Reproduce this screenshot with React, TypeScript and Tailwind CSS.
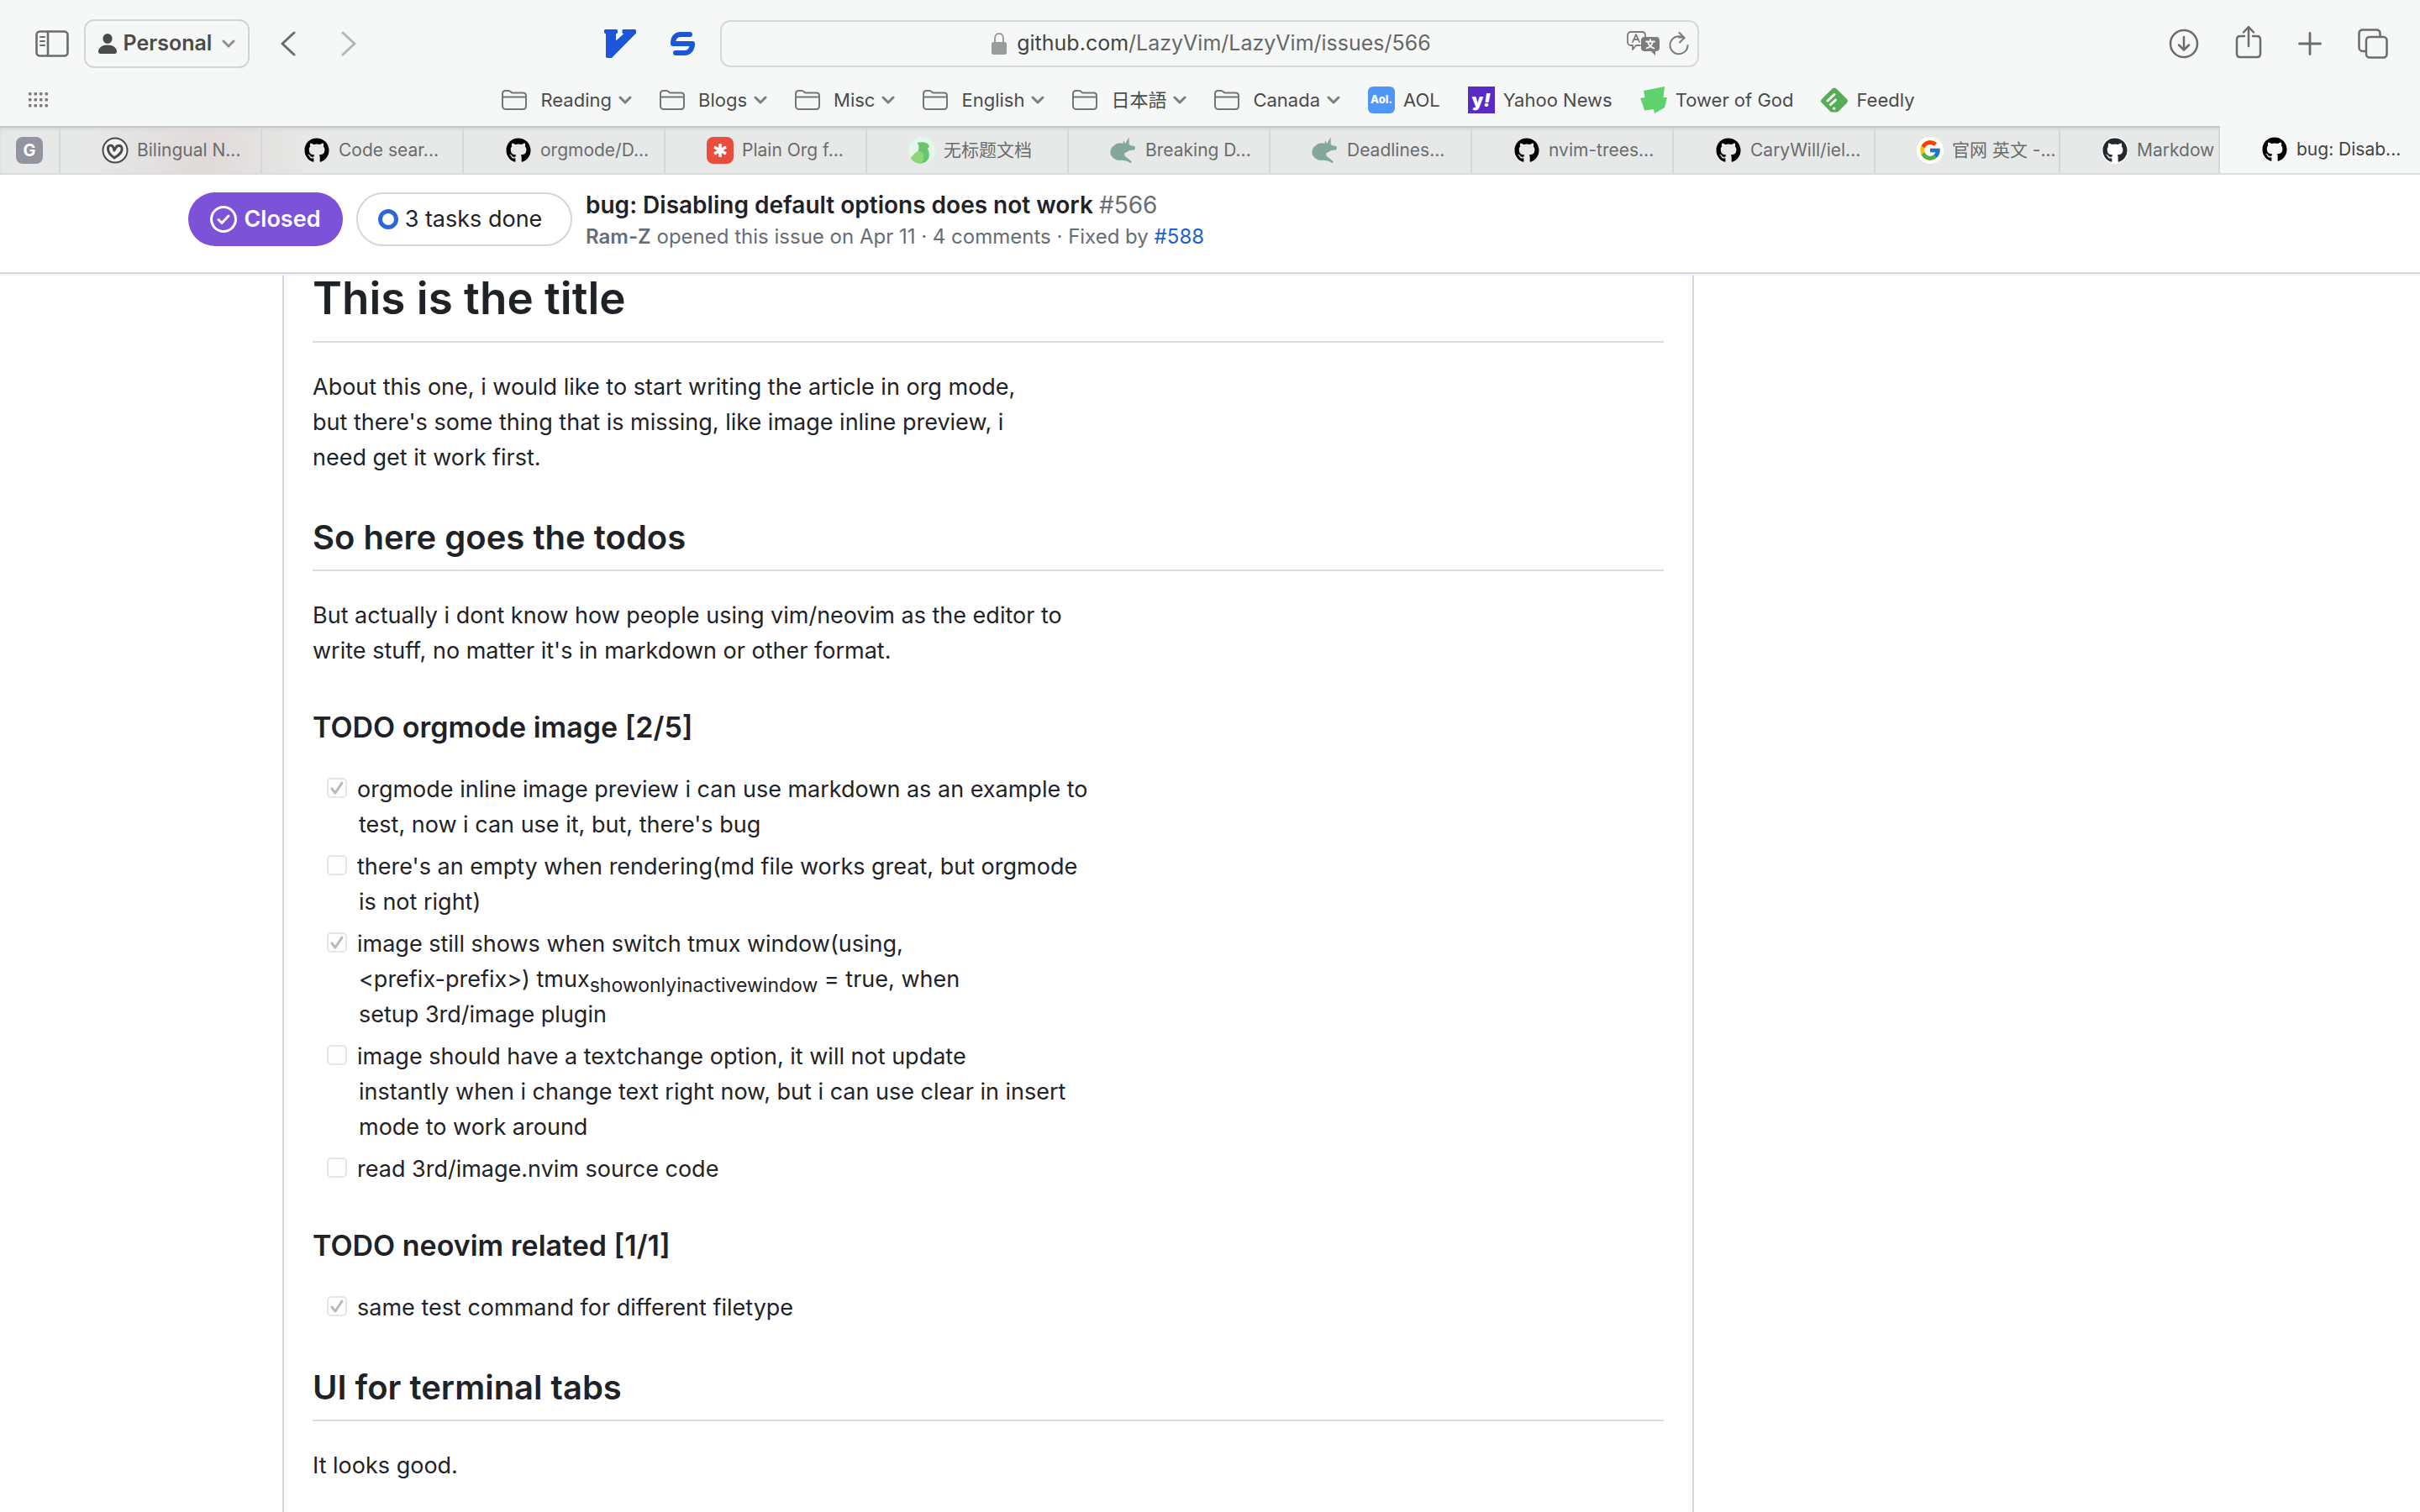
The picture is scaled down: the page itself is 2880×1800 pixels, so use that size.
import React from "react";
import { FaGithub } from "react-icons/fa";
import { FcGoogle } from "react-icons/fc";

const stroke = {
  fill: "none",
  stroke: "currentColor",
  strokeLinecap: "round" as const,
  strokeLinejoin: "round" as const,
};

function SidebarIcon() {
  return (
    <svg width="40" height="32" viewBox="0 0 40 32" {...stroke} strokeWidth="2.6">
      <rect x="1.5" y="1.5" width="37" height="29" rx="4" />
      <path d="M15 2v28" />
      <path d="M6 8h5M6 13h5M6 18h5" strokeWidth="2" />
    </svg>
  );
}

function PersonIcon() {
  return (
    <svg width="22" height="24" viewBox="0 0 22 24" fill="currentColor">
      <ellipse cx="11" cy="6" rx="5.6" ry="6" />
      <path d="M0 21.5c0-4.600 4.500-8 11-8s11 3.400 11 8c0 1.500-1 2.500-2.500 2.500h-17C1 24 0 23 0 21.500z" />
    </svg>
  );
}

function ChevronDown() {
  return (
    <svg width="16" height="10" viewBox="0 0 16 10" {...stroke} strokeWidth="3">
      <path d="M2 2l6 6 6-6" />
    </svg>
  );
}

function Arrow({ forward }: { forward?: boolean }) {
  return (
    <svg width="18" height="30" viewBox="0 0 18 30" {...stroke} strokeWidth="3">
      <path d={forward ? "M2 2l14 13L2 28" : "M16 2L2 15l14 13"} />
    </svg>
  );
}

function VimiumIcon() {
  return (
    <svg width="38" height="36" viewBox="0 0 38 36" fill="#1b55d9">
      <path d="M1 1h14l1 1v3l-2 1.500v8L23 6.500l-1.500-1.500V2l1-1H37l1 1v3.500L9 35H3.500L2 34V6.500L0 5V2z" />
    </svg>
  );
}

function SurfIcon() {
  return (
    <svg width="30" height="30" viewBox="0 0 30 30" {...stroke} stroke="#1b55d9" strokeWidth="6">
      <path d="M24 4H13C7 4 4 8 4 15h23c0 6-3.500 11-9 11H7" />
    </svg>
  );
}

function LockIcon() {
  return (
    <svg width="18" height="26" viewBox="0 0 18 26" fill="#9b9c9c">
      <rect x="0" y="11" width="18" height="15" rx="2.500" />
      <path d="M4 12V7c0-3.500 2-6 5-6s5 2.500 5 6v5" fill="none" stroke="#9b9c9c" strokeWidth="2" />
    </svg>
  );
}

function TranslateIcon() {
  return (
    <svg width="40" height="30" viewBox="0 0 40 30">
      <path
        d="M16 17h-5l-4 5v-5H5c-2.500 0-4-1.500-4-4V5c0-2.500 1.500-4 4-4h13c2.500 0 4 1.500 4 4v2M7 13l4-9 4 9M8.500 10h5"
        {...stroke}
        stroke="#7b7c7c"
        strokeWidth="1.800"
      />
      <path d="M21 7h14c2.500 0 4 1.500 4 4v9c0 2.500-1.500 4-4 4h-1v5l-5-5h-8c-2.500 0-4-1.500-4-4v-9c0-2.500 1.500-4 4-4z" fill="#7b7c7c" />
      <path d="M23 12.500h10M28 10v2.500M31 12.500c-1 4-4 7-7.500 8M25 12.500c1 4 4 7 7.500 8" {...stroke} stroke="#f6f8f7" strokeWidth="1.800" />
    </svg>
  );
}

function ReloadIcon() {
  return (
    <svg width="24" height="28" viewBox="0 0 24 28" {...stroke} strokeWidth="2">
      <path d="M18.500 7.500A10.500 10.500 0 1 0 22.500 16M12 6.500h6.500M12.500 1l6 6-5.500 5.500" />
    </svg>
  );
}

function DownloadIcon() {
  return (
    <svg width="36" height="36" viewBox="0 0 36 36" {...stroke} strokeWidth="2.500">
      <circle cx="18" cy="18" r="16" />
      <path d="M18 10v15M12 19.500l6 6 6-6" />
    </svg>
  );
}

function ShareIcon() {
  return (
    <svg width="32" height="40" viewBox="0 0 32 40" {...stroke} strokeWidth="2.500">
      <path d="M11 13H6c-2.500 0-4 1.500-4 4v17c0 2.500 1.500 4 4 4h20c2.500 0 4-1.500 4-4V17c0-2.500-1.500-4-4-4h-5M16 25V3M10 8.500L16 2l6 6.500" />
    </svg>
  );
}

function PlusIcon() {
  return (
    <svg width="28" height="28" viewBox="0 0 28 28" {...stroke} strokeWidth="2.800">
      <path d="M14 1.500v25M1.500 14h25" />
    </svg>
  );
}

function TabsIcon() {
  return (
    <svg width="36" height="36" viewBox="0 0 36 36" {...stroke} strokeWidth="2.500">
      <rect x="10" y="10" width="24.500" height="24.500" rx="4" />
      <path d="M9 27H6c-2.500 0-4.500-2-4.500-4.500v-17C1.500 3 3.500 1.500 6 1.500h16c2.500 0 4.500 1.500 4.500 4V9" />
    </svg>
  );
}

function GridIcon() {
  return (
    <svg width="24" height="18" viewBox="0 0 24 18" fill="#7a7b7b">
      {[0, 7, 14].map((y) => [0, 6.5, 13, 19.5].map((x) => <rect key={x + "-" + y} x={x} y={y} width="3.500" height="3.500" rx="1" />))}
    </svg>
  );
}

function FolderIcon() {
  return (
    <svg width="30" height="24" viewBox="0 0 30 24" {...stroke} stroke="#757676" strokeWidth="2">
      <path d="M1 4.500C1 2.500 2.200 1 4.500 1h4c2 0 2.500 2.500 4.500 2.500h12.500c2.300 0 3.500 1 3.500 3.500v12c0 2.500-1.200 4-3.500 4h-21C2.200 23 1 21.500 1 19zM1 8.500h28" />
    </svg>
  );
}

function TowerIcon() {
  return (
    <svg width="32" height="32" viewBox="0 0 32 32" fill="#5fd26d">
      <path d="M4 5l25-5-1.500 13H32l-3 12-12 7-1-5-11 1.500-2-7L0 14l5.500-1z" />
    </svg>
  );
}

function FeedlyIcon() {
  return (
    <svg width="32" height="30" viewBox="0 0 32 30">
      <path d="M13 2c2-2 4-2 6 0l11.500 11.500c2 2 2 3.500 0 5.500L21 28.500c-.8.800-1.500 1-2.500 1h-5c-1 0-1.700-.2-2.500-1L1.500 19c-2-2-2-3.500 0-5.500z" fill="#57ad57" />
      <path d="M8 16l8-7.500M11.500 20.500l6-5.500M15.500 25h.500" {...stroke} stroke="#fff" strokeWidth="3" />
    </svg>
  );
}

function HeartMark() {
  return (
    <svg width="32" height="32" viewBox="0 0 32 32" {...stroke} stroke="#4a4a4a">
      <circle cx="16" cy="16" r="14.500" strokeWidth="2" fill="#f4f4f4" />
      <path d="M15 25C10 21.500 7 18 7.500 13 8 9.500 12 9 14 12.500l1 3.500 2-3.500c1.500-3 6-3.500 7 .5C25 17 21 21.500 15 25z" strokeWidth="3" />
    </svg>
  );
}

function BirdMark() {
  return (
    <svg width="32" height="32" viewBox="0 0 32 32">
      <circle cx="16" cy="16" r="16" fill="#e3f7ea" />
      <path d="M10.500 7c4-1 9-1.500 12.500 1l2 3.500-2 2.500c4 8 1.500 17-8 17.500C9 31.500 5 29 3 25c5-3 10-7 9.500-13 0-2-1-4-2-5z" fill="#67c56f" />
      <path d="M3 25c3-4 6-8 9.500-8s5.500 3 5.500 7-1.500 7-3 7.500C9 31.500 5 29 3 25z" fill="#8fd873" />
    </svg>
  );
}

function UnicornMark() {
  return (
    <svg width="32" height="32" viewBox="0 0 32 32" fill="#84a79a">
      <path d="M22.500 0l.2 9c2.300 1.700 5 1.800 7 2.500.8 1.200.3 2.700-1 4-3 .5-5.500 0-7 1.500-2.500 1.500-5 2-4.700 4 .3 3 6 5 8.500 8.500l-.5 2c-2-2-5-3-9-3.500-4-.5-7 .5-10-1.500C2 24 0 21 .5 17 1 13 3 11 5.500 10 7 7.500 11 7 15.500 8l.5-3.500L18.500 8z" />
    </svg>
  );
}

function GithubMark() {
  return <FaGithub size={30} color="#000" />;
}

type Bookmark = { label: string; icon?: React.ReactNode };

const bookmarks: Bookmark[] = [
  { label: "Reading" },
  { label: "Blogs" },
  { label: "Misc" },
  { label: "English" },
  { label: "日本語" },
  { label: "Canada" },
  {
    label: "AOL",
    icon: (
      <span className="flex size-8 items-center justify-center rounded-md bg-[#4f97f7] text-[13px] font-extrabold text-white">Aol.</span>
    ),
  },
  {
    label: "Yahoo News",
    icon: (
      <span className="flex size-8 items-center justify-center bg-[#582bc8] text-[22px] leading-none font-black text-white">
        y<i>!</i>
      </span>
    ),
  },
  { label: "Tower of God", icon: <TowerIcon /> },
  { label: "Feedly", icon: <FeedlyIcon /> },
];

type Tab = { label: string; icon: React.ReactNode; width: string };

const tabs: Tab[] = [
  { label: "Bilingual N...", icon: <HeartMark />, width: "w-60" },
  { label: "Code sear...", icon: <GithubMark />, width: "w-60" },
  { label: "orgmode/D...", icon: <GithubMark />, width: "w-60" },
  {
    label: "Plain Org f...",
    icon: (
      <svg width="32" height="32" viewBox="0 0 32 32">
        <rect width="32" height="32" rx="8" fill="#ea4d3d" />
        <path d="M16 8v16M9 12l14 8M23 12L9 20" stroke="#fff" strokeWidth="3.600" />
      </svg>
    ),
    width: "w-60",
  },
  { label: "无标题文档", icon: <BirdMark />, width: "w-60" },
  { label: "Breaking D...", icon: <UnicornMark />, width: "w-60" },
  { label: "Deadlines...", icon: <UnicornMark />, width: "w-60" },
  { label: "nvim-trees...", icon: <GithubMark />, width: "w-60" },
  { label: "CaryWill/iel...", icon: <GithubMark />, width: "w-60" },
  {
    label: "官网 英文 -...",
    icon: (
      <span className="flex size-8 items-center justify-center rounded-full bg-white">
        <FcGoogle size={28} />
      </span>
    ),
    width: "w-[220px]",
  },
  {
    label: "Markdow",
    icon: (
      <span className="flex size-8 items-center justify-center rounded-full bg-white">
        <FaGithub size={30} color="#24292f" />
      </span>
    ),
    width: "w-[190px]",
  },
];

function Toolbar() {
  return (
    <div className="flex h-[104px] items-center pl-[42px] text-[#6b6c6c]">
      <div className="flex w-[815px] shrink-0 items-center">
        <button aria-label="Show sidebar">
          <SidebarIcon />
        </button>
        <button className="ml-[18px] flex h-[58px] w-[197px] items-center justify-center gap-2 rounded-xl border-2 border-[#d3d5d4] text-[25px] font-semibold text-[#4a4b4b]">
          <PersonIcon />
          Personal
          <span className="ml-1 text-[#8f9090]">
            <ChevronDown />
          </span>
        </button>
        <button aria-label="Back" className="ml-[37px]">
          <Arrow />
        </button>
        <button aria-label="Forward" className="ml-[54px] text-[#b4b6b5]">
          <Arrow forward />
        </button>
        <button aria-label="Vimium" className="ml-auto">
          <VimiumIcon />
        </button>
        <button aria-label="Surfingkeys" className="mr-[30px] ml-10">
          <SurfIcon />
        </button>
      </div>
      <div className="flex h-14 flex-1 items-center rounded-xl border-2 border-[#d8dad9] pr-2.5 pl-[88px]">
        <a href="#address" className="flex flex-1 items-center justify-center gap-3 text-[25px] text-[#666767]">
          <LockIcon />
          <span>
            <span className="text-[#424343]">github.com</span>/LazyVim/LazyVim/issues/566
          </span>
        </a>
        <button aria-label="Translate">
          <TranslateIcon />
        </button>
        <button aria-label="Reload" className="ml-2.5 text-[#7b7c7c]">
          <ReloadIcon />
        </button>
      </div>
      <div className="flex w-[858px] shrink-0 items-center justify-end gap-[43px] pr-[38px]">
        <button aria-label="Downloads">
          <DownloadIcon />
        </button>
        <button aria-label="Share" className="-mt-1">
          <ShareIcon />
        </button>
        <button aria-label="New tab">
          <PlusIcon />
        </button>
        <button aria-label="Tab overview">
          <TabsIcon />
        </button>
      </div>
    </div>
  );
}

function BookmarksBar() {
  return (
    <nav className="flex h-[46px] items-center pb-4 text-[22px] text-[#4a4b4b]">
      <button aria-label="All bookmarks" className="ml-[34px]">
        <GridIcon />
      </button>
      <div className="mr-[62px] flex flex-1 items-center justify-center gap-[33px]">
        {bookmarks.map((b) =>
          b.icon ? (
            <a key={b.label} href="#bookmark" className="flex items-center gap-2.5 whitespace-nowrap">
              {b.icon}
              {b.label}
            </a>
          ) : (
            <button key={b.label} className="flex items-center gap-2 whitespace-nowrap">
              <span className="mr-2">
                <FolderIcon />
              </span>
              {b.label}
              <span className="text-[#7d7e7e]">
                <ChevronDown />
              </span>
            </button>
          ),
        )}
      </div>
    </nav>
  );
}

function TabBar() {
  return (
    <div role="tablist" className="flex h-[58px] border-b-2 border-[#dbdddc] bg-[#f6f8f7] text-[21px] text-[#6b6c6c]">
      <div className="flex min-w-0 border-t-2 border-[#c6c8c7] bg-[#e7e9e8] bg-[radial-gradient(circle_at_240px_40px,#e0d9d8,#e7e9e8_140px)] bg-no-repeat shadow-[inset_0_3px_3px_#d9dbda]">
        <button role="tab" aria-selected="false" className="flex w-[72px] items-center border-r-2 border-[#d6d8d7] pl-[19px]">
          <span className="flex size-8 items-center justify-center rounded-lg bg-[#9493a0] text-[20px] font-bold text-white">G</span>
        </button>
        {tabs.map((t) => (
          <button
            key={t.label}
            role="tab"
            aria-selected="false"
            className={t.width + " flex shrink-0 items-center gap-2.5 border-r-2 border-[#d6d8d7] pl-[49px] whitespace-nowrap"}
          >
            <span className="flex size-8 shrink-0 items-center justify-center">{t.icon}</span>
            {t.label}
          </button>
        ))}
      </div>
      <button role="tab" aria-selected="true" className="flex flex-1 items-center gap-2.5 pl-[49px] whitespace-nowrap text-[#424343]">
        <span className="flex size-8 shrink-0 items-center justify-center">
          <GithubMark />
        </span>
        bug: Disab...
      </button>
    </div>
  );
}

function IssueHeader() {
  return (
    <div className="z-10 flex h-[118px] shrink-0 items-center border-b-2 border-[#d0d7de] bg-white pb-2.5 pl-56 shadow-[0_2px_0_#f3f4f5]">
      <span className="flex h-16 w-[184px] items-center justify-center gap-2 rounded-full bg-[#7c52d8] text-[27px] font-semibold text-white">
        <svg width="32" height="32" viewBox="0 0 32 32" {...stroke} strokeWidth="3">
          <circle cx="16" cy="16" r="14.500" />
          <path d="M10 16.500l4 4 8-8.500" />
        </svg>
        Closed
      </span>
      <span className="ml-4 flex h-16 w-[257px] items-center justify-center gap-2 rounded-full border-2 border-[#d0d7de] pr-2.5 text-[27px] text-[#1f2328]">
        <span className="size-6 rounded-full border-[5px] border-[#2968d8]" />
        3 tasks done
      </span>
      <div className="ml-4 flex flex-col pt-0.5">
        <h1 className="text-[28px] leading-[40px] font-semibold text-[#1f2328]">
          bug: Disabling default options does not work <span className="font-normal text-[#656d76]">#566</span>
        </h1>
        <p className="text-[24px] leading-[36px] text-[#656d76]">
          <b className="font-semibold">Ram-Z</b> opened this issue on Apr 11 · 4 comments · Fixed by{" "}
          <a href="#588" className="text-[#1f5fd6]">
            #588
          </a>
        </p>
      </div>
    </div>
  );
}

function Task({ id, done, children }: { id: string; done?: boolean; children: React.ReactNode }) {
  return (
    <li className="flex gap-3">
      <span className="relative mt-[7px] size-6 shrink-0">
        <input
          id={id}
          type="checkbox"
          defaultChecked={done}
          disabled
          className="block size-6 appearance-none rounded-[5px] border-2 border-[#e6e6e6] bg-[#fdfdfd]"
        />
        {done && (
          <svg className="absolute inset-0" width="24" height="24" viewBox="0 0 24 24" {...stroke} stroke="#b9b9b9" strokeWidth="3">
            <path d="M6 13l4 5 8-12" />
          </svg>
        )}
      </span>
      <label htmlFor={id} className="pl-0.5 -indent-0.5">
        {children}
      </label>
    </li>
  );
}

function H2({ children }: { children: React.ReactNode }) {
  return <h2 className="mt-12 mb-8 border-b-2 border-[#d8dee4] pb-3 text-[40px] leading-[52px] font-semibold">{children}</h2>;
}

function H3({ children }: { children: React.ReactNode }) {
  return <h3 className="mt-12 mb-8 text-[34px] leading-[43px] font-semibold">{children}</h3>;
}

function IssueBody() {
  return (
    <main className="flex min-h-0 flex-1 overflow-hidden pr-[864px] pl-[336px]">
      <article className="h-max min-h-full flex-1 border-x-2 border-[#d0d7de] px-[34px] pb-16 text-[27px] leading-[42px] text-[#1f2328]">
        <h1 className="mb-8 border-b-2 border-[#d8dee4] pb-[22px] text-[53px] leading-[58px] font-semibold">This is the title</h1>
        <p>
          About this one, i would like to start writing the article in org mode,
          <br />
          but there's some thing that is missing, like image inline preview, i
          <br />
          need get it work first.
        </p>
        <H2>So here goes the todos</H2>
        <p>
          But actually i dont know how people using vim/neovim as the editor to
          <br />
          write stuff, no matter it's in markdown or other format.
        </p>
        <H3>TODO orgmode image [2/5]</H3>
        <ul className="flex flex-col gap-2 pl-[17px]">
          <Task id="inline-preview" done>
            orgmode inline image preview i can use markdown as an example to
            <br />
            test, now i can use it, but, there's bug
          </Task>
          <Task id="empty-render">
            there's an empty when rendering(md file works great, but orgmode
            <br />
            is not right)
          </Task>
          <Task id="tmux-window" done>
            image still shows when switch tmux window(using,
            <br />
            &lt;prefix-prefix&gt;) tmux<sub className="text-[23px]">showonlyinactivewindow</sub> = true, when
            <br />
            setup 3rd/image plugin
          </Task>
          <Task id="textchange">
            image should have a textchange option, it will not update
            <br />
            instantly when i change text right now, but i can use clear in insert
            <br />
            mode to work around
          </Task>
          <Task id="read-source">read 3rd/image.nvim source code</Task>
        </ul>
        <H3>TODO neovim related [1/1]</H3>
        <ul className="pl-[17px]">
          <Task id="same-test" done>
            same test command for different filetype
          </Task>
        </ul>
        <H2>UI for terminal tabs</H2>
        <p>It looks good.</p>
      </article>
    </main>
  );
}

export default function App() {
  return (
    <div className="flex h-screen flex-col overflow-hidden bg-white font-['Inter','Noto_Sans_CJK_SC',sans-serif]">
      <header className="shrink-0 bg-[#f6f8f7]">
        <Toolbar />
        <BookmarksBar />
        <TabBar />
      </header>
      <IssueHeader />
      <IssueBody />
    </div>
  );
}
